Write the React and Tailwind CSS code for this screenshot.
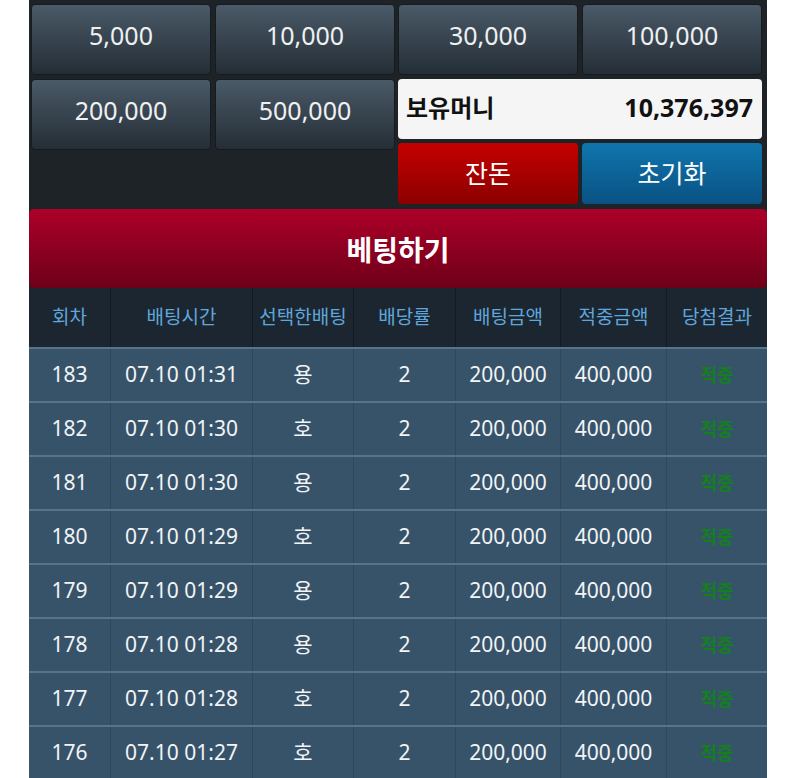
import React from 'react';

const chips = ['5,000', '10,000', '30,000', '100,000', '200,000', '500,000'];

const rows = [
  ['183', '07.10 01:31', '용'],
  ['182', '07.10 01:30', '호'],
  ['181', '07.10 01:30', '용'],
  ['180', '07.10 01:29', '호'],
  ['179', '07.10 01:29', '용'],
  ['178', '07.10 01:28', '용'],
  ['177', '07.10 01:28', '호'],
  ['176', '07.10 01:27', '호'],
];

const headers = ['회차', '배팅시간', '선택한배팅', '배당률', '배팅금액', '적중금액', '당첨결과'];

const Chip = ({ label }) => (
  <button className="w-[180px] h-[71px] pb-[8px] rounded-[4px] border border-[#161b20] bg-gradient-to-b from-[#4a5a68] to-[#252e36] text-[25px] text-[#eef0f2]">
    {label}
  </button>
);

const App = () => {
  return (
    <div
      className="min-h-screen bg-white"
      style={{ fontFamily: '"Noto Sans", "Noto Sans CJK KR", sans-serif' }}
    >
      <div className="ml-[29px] w-[738px] bg-[#1e2328]">
        {/* chip buttons + money */}
        <div className="flex gap-[3px] pl-[2px] pr-[5px] pt-[4px]">
          <div className="flex flex-col gap-[4px] w-[364px]">
            <div className="flex gap-[4px]">
              <Chip label={chips[0]} />
              <Chip label={chips[1]} />
            </div>
            <div className="flex gap-[4px]">
              <Chip label={chips[4]} />
              <Chip label={chips[5]} />
            </div>
          </div>
          <div className="flex flex-col w-[364px]">
            <div className="flex gap-[4px]">
              <Chip label={chips[2]} />
              <Chip label={chips[3]} />
            </div>
            <div className="mt-[4px] h-[60px] pb-[2px] rounded-[4px] bg-[#f5f5f5] flex items-center justify-between pl-[8px] pr-[9px]">
              <span className="text-[24px] font-bold text-[#111]">보유머니</span>
              <span className="text-[25px] font-bold text-[#111]">10,376,397</span>
            </div>
            <div className="mt-[4px] flex gap-[4px]">
              <button className="w-[180px] h-[61px] rounded-[4px] bg-gradient-to-b from-[#c40000] to-[#8c0000] text-[25px] text-white">
                잔돈
              </button>
              <button className="w-[180px] h-[61px] rounded-[4px] bg-gradient-to-b from-[#0f76ad] to-[#0a5183] text-[25px] text-white">
                초기화
              </button>
            </div>
          </div>
        </div>

        {/* bet button */}
        <button className="mt-[5px] w-full h-[79px] pt-[3px] rounded-[5px] bg-gradient-to-b from-[#ad0029] to-[#6e0019] text-[28px] font-bold text-white">
          베팅하기
        </button>

        {/* history table */}
        <div className="grid grid-cols-[81px_142px_101px_102px_105px_106px_101px] h-[59px] bg-[#1c2630]">
          {headers.map((h, i) => (
            <div
              key={h}
              className={`flex items-center justify-center text-[19px] text-[#5fa6dd] ${i > 0 ? 'border-l border-[#131b22]' : ''}`}
            >
              {h}
            </div>
          ))}
        </div>
        {rows.map(([no, time, pick]) => (
          <div
            key={no}
            className="grid grid-cols-[81px_142px_101px_102px_105px_106px_101px] h-[54px] bg-[#37536a] border-t-2 border-[#56758c] text-[21px] text-[#f2f4f6]"
          >
            <div className="flex items-center justify-center">{no}</div>
            <div className="flex items-center justify-center border-l border-[#2e475b]">{time}</div>
            <div className="flex items-center justify-center border-l border-[#2e475b]">{pick}</div>
            <div className="flex items-center justify-center border-l border-[#2e475b]">2</div>
            <div className="flex items-center justify-center border-l border-[#2e475b]">200,000</div>
            <div className="flex items-center justify-center border-l border-[#2e475b]">400,000</div>
            <div className="flex items-center justify-center border-l border-[#2e475b] text-[18px] font-bold text-[#13801d]">
              적중
            </div>
          </div>
        ))}
      </div>
    </div>
  );
};

export default App;
